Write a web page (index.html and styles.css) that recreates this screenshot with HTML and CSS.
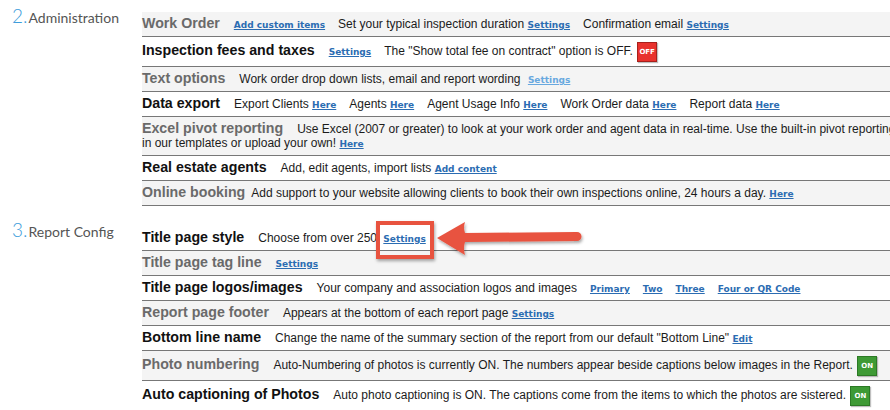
FILE: index.html
```html
<!DOCTYPE html>
<html>
<head>
  <meta charset="utf-8">
  <link rel="stylesheet" href="styles.css">
</head>
<body>
  <div class="page">

    <!-- 2. Administration -->
    <section class="section">
      <h2 class="section-title"><span class="num">2.</span>Administration</h2>
      <div class="rows">
        <div class="row shade">
          <div class="line"><b class="head">Work Order</b><a href="#" class="link item">Add custom items</a><span class="item">Set your typical inspection duration <a href="#" class="link">Settings</a></span><span class="item">Confirmation email <a href="#" class="link">Settings</a></span></div>
        </div>
        <div class="row tall">
          <div class="line"><b class="head">Inspection fees and taxes</b><a href="#" class="link item">Settings</a><span class="item">The "Show total fee on contract" option is OFF. <span class="badge off">OFF</span></span></div>
        </div>
        <div class="row shade">
          <div class="line"><b class="head">Text options</b><span class="item">Work order drop down lists, email and report wording <a href="#" class="link light">Settings</a></span></div>
        </div>
        <div class="row">
          <div class="line"><b class="head">Data export</b><span class="item">Export Clients <a href="#" class="link">Here</a></span><span class="item">Agents <a href="#" class="link">Here</a></span><span class="item">Agent Usage Info <a href="#" class="link">Here</a></span><span class="item">Work Order data <a href="#" class="link">Here</a></span><span class="item">Report data <a href="#" class="link">Here</a></span></div>
        </div>
        <div class="row shade wrap">
          <div class="line"><b class="head">Excel pivot reporting</b>Use Excel (2007 or greater) to look at your work order and agent data in real-time. Use the built-in pivot reporting in our templates or upload your own! <a href="#" class="link">Here</a></div>
        </div>
        <div class="row">
          <div class="line"><b class="head">Real estate agents</b><span class="item">Add, edit agents, import lists <a href="#" class="link">Add content</a></span></div>
        </div>
        <div class="row shade">
          <div class="line"><b class="head near">Online booking</b><span class="item">Add support to your website allowing clients to book their own inspections online, 24 hours a day. <a href="#" class="link">Here</a></span></div>
        </div>
      </div>
    </section>

    <!-- 3. Report Config -->
    <section class="section">
      <h2 class="section-title"><span class="num">3.</span>Report Config</h2>
      <div class="rows">
        <div class="row callout">
          <div class="line"><b class="head">Title page style</b><span class="item">Choose from over 250 <a href="#" class="link boxed">Settings</a></span></div>
          <!-- annotation drawn over the row -->
          <div class="callout-box"></div>
          <svg class="callout-arrow" width="150" height="42" viewBox="0 0 150 42">
            <defs>
              <filter id="shadow" x="-10%" y="-30%" width="120%" height="170%">
                <feDropShadow dx="1" dy="2" stdDeviation="1.5" flood-color="#000" flood-opacity="0.35"/>
              </filter>
            </defs>
            <path d="M2 20 L30 4 Q28 10 30 15 L142 14 A4.5 4.5 0 0 1 142 23 L30 24 Q28 30 30 37 Z" fill="#e8533f" filter="url(#shadow)"/>
          </svg>
        </div>
        <div class="row shade">
          <div class="line"><b class="head">Title page tag line</b><a href="#" class="link item">Settings</a></div>
        </div>
        <div class="row">
          <div class="line"><b class="head">Title page logos/images</b><span class="item">Your company and association logos and images</span><a href="#" class="link item">Primary</a><a href="#" class="link item">Two</a><a href="#" class="link item">Three</a><a href="#" class="link item">Four or QR Code</a></div>
        </div>
        <div class="row shade">
          <div class="line"><b class="head">Report page footer</b><span class="item">Appears at the bottom of each report page <a href="#" class="link">Settings</a></span></div>
        </div>
        <div class="row">
          <div class="line"><b class="head">Bottom line name</b><span class="item">Change the name of the summary section of the report from our default "Bottom Line" <a href="#" class="link">Edit</a></span></div>
        </div>
        <div class="row shade tall">
          <div class="line"><b class="head">Photo numbering</b><span class="item">Auto-Numbering of photos is currently ON. The numbers appear beside captions below images in the Report. <span class="badge on">ON</span></span></div>
        </div>
        <div class="row tall">
          <div class="line"><b class="head">Auto captioning of Photos</b><span class="item">Auto photo captioning is ON. The captions come from the items to which the photos are sistered. <span class="badge on">ON</span></span></div>
        </div>
      </div>
    </section>

  </div>
</body>
</html>
```

FILE: styles.css
```css
body {
  margin: 0;
  background: #fff;
  font-family: "Liberation Sans", Arial, sans-serif;
  font-size: 12px;
  color: #1b1b1b;
  overflow: hidden;
}

.page {
  width: 902px;
  padding-top: 12px;
}

.section {
  display: grid;
  grid-template-columns: 142px 760px;
  margin-bottom: 20px;
}

.section-title {
  margin: -4px 0 0;
  padding-left: 12px;
  font-family: Lato, "Open Sans", sans-serif;
  font-weight: 400;
  font-size: 14px;
  line-height: 16px;
  color: #555;
}

.num {
  color: #3d9ddb;
  font-size: 19px;
  font-weight: 300;
  margin-right: 1px;
}

.row {
  display: flex;
  align-items: center;
  min-height: 24px;
  border-bottom: 1px solid #777;
  line-height: 14px;
}

.row.shade {
  background: #f4f4f4;
}

.row.tall {
  min-height: 29px;
}

.row.wrap {
  padding: 4px 0;
}

.head {
  font-size: 14.2px;
  font-weight: bold;
  color: #111;
  margin-right: 14px;
}

.shade .head {
  color: #6a6a6a;
}

.head.near {
  margin-right: 6px;
}

.item {
  margin-right: 13px;
}

.link {
  font-family: "DejaVu Sans", Verdana, sans-serif;
  font-size: 9px;
  font-weight: bold;
  color: #2b6cb2;
  text-decoration: underline;
}

.link.light {
  color: #68a8df;
  margin-left: 4px;
}

.link.boxed {
  margin-left: 3px;
}

.badge {
  display: inline-block;
  box-sizing: border-box;
  width: 20px;
  height: 20px;
  margin-left: 1px;
  font-family: "DejaVu Sans", Verdana, sans-serif;
  font-size: 7px;
  font-weight: bold;
  line-height: 18px;
  text-align: center;
  color: #fff;
  vertical-align: middle;
  box-shadow: 1px 1px 1px rgba(0, 0, 0, 0.25);
}

.badge.off {
  background: #e8322d;
  border: 1px solid #a8201c;
}

.badge.on {
  background: #3e9a35;
  border: 1px solid #2c7a25;
}

/* red annotation over "Title page style" */
.row.callout {
  position: relative;
}

.callout-box {
  position: absolute;
  left: 234px;
  top: -5px;
  width: 58px;
  height: 38px;
  box-sizing: border-box;
  border: 4px solid #e8533f;
  box-shadow: 1px 2px 3px rgba(0, 0, 0, 0.35);
}

.callout-arrow {
  position: absolute;
  left: 293px;
  top: -8px;
}
```
